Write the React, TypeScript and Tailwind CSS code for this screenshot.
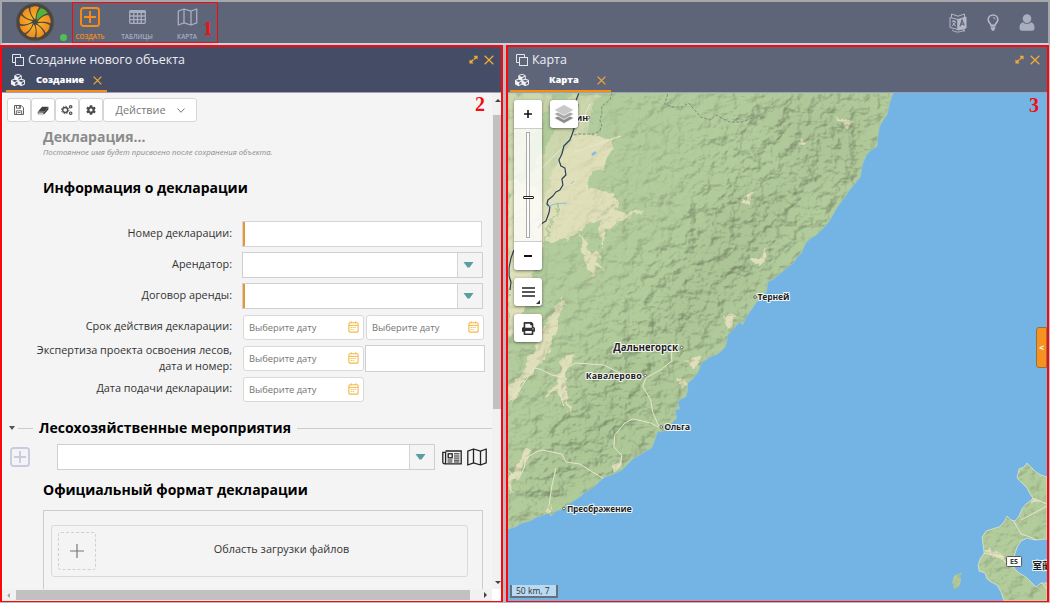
import React from "react";
import { FaCubes, FaCog, FaPrint } from "react-icons/fa";

const COAST =
  "M508 93 L894 93 L892 98 890 104 888 114 884 120 880 127 879 134 878 140 878 146 872 150 867 155 865 160 863 165 862 171 861 177 856 183 850 190 844 199 838 207 834 214 830 221 824 228 818 234 812 238 807 242 804 248 802 253 797 258 793 264 786 269 780 274 774 279 768 282 767 292 762 297 757 302 753 308 750 312 746 318 743 325 741 322 737 325 733 330 728 335 727 342 725 348 718 354 710 357 702 363 698 373 693 379 688 383 688 390 686 397 681 399 678 402 680 409 675 410 677 418 672 423 668 428 662 432 658 431 655 440 652 448 646 451 640 455 634 458 628 464 622 470 614 474 605 477 599 482 593 488 585 492 580 497 575 500 570 503 565 508 560 510 556 511 551 516 549 513 544 515 537 517 530 521 522 523 515 527 508 529 Z";
const HOKKAIDO =
  "M1048 477 L1042 475 1037 472 1032 467 1028 463 1025 467 1020 469 1018 478 1023 483 1028 488 1031 494 1034 498 1031 501 1027 504 1023 509 1020 516 1016 521 1012 520 1008 516 1005 522 1000 527 993 529 987 531 983 537 984 545 985 553 981 559 979 565 980 571 986 573 988 579 992 582 998 585 1002 592 1005 601 1048 601 1048 583 1042 583 1037 587 1032 582 1027 577 1020 573 1015 568 1015 557 1018 547 1022 541 1028 538 1036 540 1048 539 Z";
const ISLET = "M963 572 L961 576 962 581 959 588 955 589 953 582 955 576 959 574 Z";

function LogoIcon() {
  const petals = [0, 40, 80, 120, 160, 200, 240, 280, 320];
  return (
    <svg viewBox="-20 -20 40 40" className="size-10">
      <defs>
        <radialGradient id="petal" gradientUnits="userSpaceOnUse" cx="0" cy="0" r="16">
          <stop offset="0" stopColor="#f9c02c" />
          <stop offset="1" stopColor="#f08a1e" />
        </radialGradient>
      </defs>
      <circle r="18.800" fill="#4a4640" stroke="#5b564c" strokeWidth=".8" />
      {petals.map((a) => (
        <path
          key={a}
          transform={`rotate(${a})`}
          d="M.3 -2.500 C-2.500 -5 -5 -9 -4.600 -14.200 C-2 -16 2 -16.200 4.200 -14.800 C1.500 -11.500 1 -7 .3 -2.500Z"
          fill={a === 40 ? "#4fb53a" : "url(#petal)"}
        />
      ))}
    </svg>
  );
}

function PlusBox({ className }: { className: string }) {
  return (
    <svg viewBox="0 0 20 20" className={className} fill="none" stroke="currentColor">
      <rect x="1" y="1" width="18" height="18" rx="2.600" strokeWidth="1.900" />
      <path d="M10 4v12M4 10h12" strokeWidth="1.900" />
    </svg>
  );
}

function TableIcon() {
  return (
    <svg viewBox="0 0 17 14" className="h-[14px] w-[17px]" fill="none" stroke="#a9aec0" strokeWidth="1.300">
      <rect x=".7" y=".7" width="15.600" height="12.600" rx="1" />
      <path d="M.7 1.800h15.600" strokeWidth="2.400" />
      <path d="M1 6h15M1 9.600h15M4.800 2v11M8.500 2v11M12.200 2v11" />
    </svg>
  );
}

function MapIcon({ className }: { className: string }) {
  return (
    <svg viewBox="0 0 20 18" className={className} fill="none" stroke="currentColor" strokeWidth="1.300" strokeLinejoin="round">
      <path d="M.8 3.200 6.500 1l7 2.200L19.200 1v13.800L13.500 17l-7-2.200L.8 17ZM6.500 1v13.800M13.500 3.200V17" />
    </svg>
  );
}

function WindowIcon() {
  return (
    <svg viewBox="0 0 12 12" className="size-3" fill="none" stroke="#e4e6ee" strokeWidth="1">
      <path d="M3 8.500H.5v-8h8V3" />
      <rect x="3.500" y="3.500" width="8" height="8" />
    </svg>
  );
}

function ExpandIcon() {
  return (
    <svg viewBox="0 0 10 10" className="size-[9px]" fill="#f0ad35">
      <path d="M5 .7h4.500v4.500L8 3.700 6.100 5.600 4.900 4.400 6.500 2.400ZM.5 9.500V5L2 6.400 4 4.600l1.200 1.200L3.500 7.800 5 9.500Z" />
    </svg>
  );
}

function CloseIcon({ className }: { className: string }) {
  return (
    <svg viewBox="0 0 10 10" className={className} stroke="#f0ad35" strokeWidth="1.300">
      <path d="M.7.7l8.600 8.600M9.300.7L.7 9.300" />
    </svg>
  );
}

function SaveIcon() {
  return (
    <svg viewBox="0 0 11 11" className="size-[10px]" fill="none" stroke="#4c4c4c">
      <path d="M.6.6h7.400l2.400 2.400v7.400H.6Z" />
      <path d="M2.800.8v2.800h4.400V.8M6 1v2M2.600 10.200V6.400h5.800v3.800M4 8.300h3" strokeWidth=".9" />
    </svg>
  );
}

function EraserIcon() {
  return (
    <svg viewBox="0 0 12 9" className="h-[9px] w-3">
      <path d="M5 .8h6.400L7.200 5.800H.9Z" fill="#3f3f3f" />
      <path d="M.8 5.900h6.400v2.400H.8ZM7.200 8.300l4.200-4.800V.8L7.200 5.800Z" fill="#3f3f3f" />
      <path d="M1.300 6.600h5.200v1.100H1.300Z" fill="#fff" />
    </svg>
  );
}

function CogsIcon() {
  return (
    <svg viewBox="0 0 12 12" className="size-3" fill="none" stroke="#4c4c4c">
      <circle cx="4.200" cy="6" r="2.500" strokeWidth="1.400" />
      <circle cx="4.200" cy="6" r="3.700" strokeWidth="1" strokeDasharray="1.400 1.500" />
      <circle cx="9.700" cy="2.800" r="1.200" strokeWidth="1.200" />
      <circle cx="9.700" cy="9.200" r="1.200" strokeWidth="1.200" />
    </svg>
  );
}

function CalendarIcon() {
  return (
    <svg viewBox="0 0 11 12" className="h-3 w-[11px]" fill="none" stroke="#f5b845">
      <rect x=".9" y="1.700" width="9.200" height="9.400" rx="1" strokeWidth="1.100" />
      <path d="M1 4.400h9M3.200.3v2M7.800.3v2" strokeWidth="1" />
      <path d="M2.600 6.500h6M2.600 8.600h4.200" strokeWidth="1" strokeDasharray="1.200 .8" />
    </svg>
  );
}

function NewsIcon() {
  return (
    <svg viewBox="0 0 20 15" className="h-[15px] w-5" fill="none" stroke="#222" strokeWidth="1.300">
      <path d="M3.600 1h15.600v12.800H2.400C1.400 13.800.8 13 .8 12V2.400h2.800v9.600c0 1-.5 1.800-1.200 1.800" />
      <rect x="6.200" y="3.800" width="4" height="4" />
      <path d="M12 3.800h5.400M12 6h5.400M12 8.100h5.400M5.600 10h4.800M12 10.200h5.400M5.600 12h4.800M12 12h5.400" strokeWidth="1" />
    </svg>
  );
}

function LanguageIcon() {
  return (
    <svg viewBox="0 0 18 20" className="h-5 w-[18px]" fill="none" stroke="#b4b8c6" strokeWidth="1">
      <path d="M1 4.500 9 6.500v10L1 14.500ZM2.500 4V1l6.500 2.200L15.500 1v3" />
      <path d="M9 6.500 17 4v11l-8 2Z" fill="#b4b8c6" />
      <path d="M3 8l4 1M5 7v2M6.500 9 3 13.200M3.800 9.700l3 3.600" />
      <path d="M11 13.500 13 7l2.200 5.500M11.700 11.500l3-.6" stroke="#5f6477" strokeWidth="1.200" />
      <path d="M3 17c3 2.500 8 2.700 12 .2M13.500 16.700l2 .2-.5 1.900" />
    </svg>
  );
}

function BulbIcon() {
  return (
    <svg viewBox="0 0 12 17" className="h-[17px] w-3" fill="none" stroke="#b4b8c6">
      <path d="M4 11.300C3.800 9.500 1.200 8.500 1.200 5.600A4.800 4.600 0 0 1 10.800 5.600C10.800 8.500 8.200 9.500 8 11.300Z" strokeWidth="1.600" />
      <path d="M6 3.500a2 2 0 0 1 2 1.800" strokeWidth="1" />
      <path d="M3.600 12.900h4.800M3.800 14.500h4.400M4.700 16h2.600" strokeWidth="1.300" />
    </svg>
  );
}

function UserIcon() {
  return (
    <svg viewBox="0 0 16 17" className="h-[17px] w-4" fill="#a9aebf">
      <circle cx="8" cy="4.600" r="4.300" />
      <path d="M4 8.300C1.500 8.700.5 11 .5 14c0 1.800 1 2.700 2.500 2.700h10c1.500 0 2.500-.9 2.500-2.700 0-3-1-5.300-3.500-5.700C10 10.300 6 10.300 4 8.300Z" />
    </svg>
  );
}

function LayersIcon() {
  return (
    <svg viewBox="0 0 22 20" className="h-5 w-[22px]" stroke="#fff" strokeWidth=".7">
      <path d="M1 14l10-5 10 5-10 5.500Z" fill="#8b8b8b" />
      <path d="M1 10l10-5 10 5-10 5.500Z" fill="#a7a7a7" />
      <path d="M1 6l10-5.500L21 6l-10 5.500Z" fill="#c9c9c9" />
    </svg>
  );
}

function NavItem({ icon, label, active }: { icon: React.ReactNode; label: string; active?: boolean }) {
  return (
    <div className={`flex flex-col items-center ${active ? "w-[46px] text-[#fb8c12]" : "w-12 text-[#a9aec0]"}`}>
      <div className="flex h-[22px] items-center">{icon}</div>
      <div className="mt-[4px] whitespace-nowrap text-[6.300px] font-semibold leading-[9px]">{label}</div>
    </div>
  );
}

function PanelHeader({ title, tab, tabGap, dark }: { title: string; tab: string; tabGap: string; dark?: boolean }) {
  return (
    <div className={`h-[46px] shrink-0 border-b border-[#9da2b2] ${dark ? "bg-[#454c66] pl-[4px]" : "bg-[#5f6579] pl-[2px]"}`}>
      <div className="flex h-[25px] items-center pl-[6px] pr-[7px]">
        <WindowIcon />
        <h1 className="ml-[4px] flex-1 text-[12.450px] leading-5 text-[#eceef4]">{title}</h1>
        <ExpandIcon />
        <CloseIcon className="ml-[6px] size-[10px]" />
      </div>
      <div className="flex h-5 w-[101px] items-start border-b-2 border-[#fb8c12] pl-[5px]">
        <FaCubes className="mt-px size-[14px] text-[#f1f2f6]" />
        <span className={`text-[9.350px] font-extrabold leading-[15px] text-white ${tabGap}`}>{tab}</span>
        <CloseIcon className="ml-auto mr-[5px] mt-[4px] size-[9px]" />
      </div>
    </div>
  );
}

function ToolButton({ children, wide }: { children: React.ReactNode; wide?: boolean }) {
  return (
    <button
      className={`flex h-6 items-center justify-center rounded-[3px] border border-[#d6d6d6] bg-white text-[#4c4c4c] ${wide ? "w-[94px]" : "w-6"}`}
    >
      {children}
    </button>
  );
}

function Row({ label, children }: { label: React.ReactNode; children: React.ReactNode }) {
  return (
    <div className="flex h-[31px] items-center">
      <div className="w-[229px] pb-[2px] text-right text-[10.860px] leading-4 text-[#333]">{label}</div>
      <div className="ml-[10px] flex items-center">{children}</div>
    </div>
  );
}

function Combo({ required, className }: { required?: boolean; className: string }) {
  return (
    <div className={`flex h-[26px] border border-[#cfcfcf] bg-white ${className}`}>
      {required && <div className="w-[2px] bg-[#ec9430]" />}
      <div className="ml-auto flex w-[25px] items-center justify-center border-l border-[#d5d5d5] bg-[#f4f4f4]">
        <svg viewBox="0 0 10 6" className="mr-[3px] h-[6px] w-[11px]" fill="#5a9ea1">
          <path d="M0 0h10L6 5.500H4Z" />
        </svg>
      </div>
    </div>
  );
}

function DateField({ className }: { className: string }) {
  return (
    <div className={`mt-px flex h-[25px] items-center justify-between rounded-[3px] border border-[#d9d9d9] bg-white pl-[5px] pr-[4px] ${className}`}>
      <span className="pt-[2px] text-[9.350px] text-[#757575]">Выберите дату</span>
      <CalendarIcon />
    </div>
  );
}

function FormPanel() {
  return (
    <section className="flex w-[503px] flex-col border-2 border-b border-[#fb070c] bg-[#f4f4f4]">
      <PanelHeader dark title="Создание нового объекта" tab="Создание" tabGap="ml-[11px]" />
      <div className="flex min-h-0 flex-1">
        <div className="min-w-0 flex-1 overflow-hidden border-l border-white pt-[5px]">
          <div className="flex pl-[4px]">
            <ToolButton><SaveIcon /></ToolButton>
            <ToolButton><EraserIcon /></ToolButton>
            <ToolButton><CogsIcon /></ToolButton>
            <ToolButton><FaCog className="size-[10px]" /></ToolButton>
            <ToolButton wide>
              <span className="text-[10.900px] text-[#777]">Действие</span>
              <svg viewBox="0 0 8 5" className="ml-[11px] h-[5px] w-2" fill="none" stroke="#777" strokeWidth="1">
                <path d="M.5.5 4 4.300 7.500.5" />
              </svg>
            </ToolButton>
          </div>
          <div className="pl-10">
            <h2 className="mt-[5px] text-[14px] font-bold leading-5 text-[#8b8b8b]">Декларация...</h2>
            <p className="text-[7.780px] italic leading-[10px] text-[#8b8b8b]">
              Постоянное имя будет присвоено после сохранения объекта.
            </p>
            <h3 className="mt-[21px] text-[14px] font-bold leading-5 text-black">Информация о декларации</h3>
          </div>
          <div className="mt-[20px]">
            <Row label="Номер декларации:">
              <div className="h-[26px] w-[240px] border border-[#d5d5d5] bg-white">
                <div className="h-full w-[2px] bg-[#ec9430]" />
              </div>
            </Row>
            <Row label="Арендатор:"><Combo className="w-[241px]" /></Row>
            <Row label="Договор аренды:"><Combo required className="w-[241px]" /></Row>
            <Row label="Срок действия декларации:">
              <DateField className="ml-px w-[121px]" />
              <DateField className="ml-[2px] w-[118px]" />
            </Row>
            <Row label={<div className="pt-[3px]">Экспертиза проекта освоения лесов,<br />дата и номер:</div>}>
              <DateField className="ml-px w-[121px]" />
              <div className="ml-px mt-px h-[27px] w-[120px] border border-[#cfcfcf] bg-white" />
            </Row>
            <Row label="Дата подачи декларации:"><DateField className="ml-px w-[121px]" /></Row>
          </div>
          <div className="mt-[14px] flex h-5 items-center pl-[6px]">
            <svg viewBox="0 0 6 4" className="h-1 w-[6px]" fill="#555"><path d="M0 0h6L3 4Z" /></svg>
            <div className="ml-[3px] w-[15px] border-t border-[#ccc]" />
            <h3 className="mx-[6px] text-[14px] font-bold leading-5 text-black">Лесохозяйственные мероприятия</h3>
            <div className="flex-1 border-t border-[#ccc]" />
          </div>
          <div className="mt-[5px] flex h-[28px] items-center pl-[7px]">
            <PlusBox className="size-5 text-[#c9cce0]" />
            <Combo className="ml-[27px] w-[378px]" />
            <div className="ml-[7px]"><NewsIcon /></div>
            <MapIcon className="ml-[5px] h-[18px] w-5 text-[#222]" />
          </div>
          <h3 className="ml-10 mt-[9px] text-[14px] font-bold leading-5 text-black">Официальный формат декларации</h3>
          <div className="ml-10 mt-[10px] h-[100px] w-[440px] border border-[#ccc] px-[7px] pt-[14px]">
            <div className="flex h-[52px] w-[417px] items-center rounded-[3px] border border-[#d9d9d9] pl-[6px]">
              <div className="flex size-[38px] items-center justify-center rounded-[3px] border border-dashed border-[#d0d0d0]">
                <svg viewBox="0 0 14 14" className="size-[14px]" stroke="#777" strokeWidth="1.200"><path d="M7 0v14M0 7h14" /></svg>
              </div>
              <span className="flex-1 pb-[4px] text-center text-[10.900px] text-[#333]">Область загрузки файлов</span>
            </div>
          </div>
        </div>
        <div className="flex w-[9px] shrink-0 flex-col items-end bg-[#f1f1f1]">
          <svg viewBox="0 0 6 3" className="mt-[6px] h-[3px] w-[6px] shrink-0" fill="#444"><path d="M0 3h6L3 0Z" /></svg>
          <div className="mt-[13px] h-[294px] w-2 shrink-0 bg-[#c1c1c1]" />
          <svg viewBox="0 0 6 3" className="mb-[5px] mt-auto h-[3px] w-[6px] shrink-0" fill="#444"><path d="M0 0h6L3 3Z" /></svg>
        </div>
      </div>
      <div className="flex h-3 shrink-0 items-center bg-white">
        <div className="flex h-full w-[490px] items-center bg-[#f1f1f1]">
          <svg viewBox="0 0 3 6" className="ml-[5px] h-[5px] w-[3px]" fill="#999"><path d="M3 0v6L0 3Z" /></svg>
          <div className="ml-[6px] h-[10px] w-[454px] bg-[#c1c1c1]" />
          <svg viewBox="0 0 3 6" className="ml-[14px] h-[6px] w-[3px]" fill="#444"><path d="M0 0v6l3-3Z" /></svg>
        </div>
      </div>
    </section>
  );
}

const places: { x: number; y: number; name: string; size: number; dot: number; length: number }[] = [
  { x: 758, y: 300.500, name: "Терней", size: 9, dot: 755.500, length: 32 },
  { x: 613.500, y: 351, name: "Дальнегорск", size: 10, dot: 682, length: 65 },
  { x: 586, y: 379, name: "Кавалерово", size: 9, dot: 645.500, length: 56 },
  { x: 664.500, y: 430.500, name: "Ольга", size: 9, dot: 661.500, length: 26 },
  { x: 567, y: 512, name: "Преображение", size: 9, dot: 564, length: 65 },
];

function Terrain() {
  return (
    <svg viewBox="508 93 540 508" className="block h-full w-full" preserveAspectRatio="none">
      <defs>
        <clipPath id="land"><path d={COAST} /><path d={HOKKAIDO} /><path d={ISLET} /></clipPath>
        <filter id="relief" x="0" y="0" width="100%" height="100%" colorInterpolationFilters="sRGB">
          <feTurbulence type="fractalNoise" baseFrequency="0.075 0.085" numOctaves="4" seed="11" result="n" />
          <feColorMatrix in="n" type="matrix" values="0 0 0 0 0 0 0 0 0 0 0 0 0 0 0 .7 .3 0 0 0" result="h" />
          <feDiffuseLighting in="h" surfaceScale="6" diffuseConstant="1.150" lightingColor="#ffffff">
            <feDistantLight azimuth="225" elevation="60" />
          </feDiffuseLighting>
        </filter>
        <filter id="rough" x="-20%" y="-20%" width="140%" height="140%">
          <feTurbulence type="fractalNoise" baseFrequency="0.090" numOctaves="3" seed="3" />
          <feDisplacementMap in="SourceGraphic" scale="13" xChannelSelector="R" yChannelSelector="G" />
          <feGaussianBlur stdDeviation=".6" />
        </filter>
        <filter id="soft" x="-20%" y="-20%" width="140%" height="140%"><feGaussianBlur stdDeviation="14" /></filter>
        <mask id="mountains">
          <rect x="508" y="93" width="540" height="510" fill="#888" />
          <g filter="url(#soft)">
            <path d="M730 93H890L860 190 760 290 690 360 620 470 520 530 530 440 620 310 690 200Z" fill="#fff" />
            <path d="M508 93H620L600 210 540 290 508 350Z" fill="#222" />
          </g>
        </mask>
      </defs>
      <rect x="508" y="93" width="540" height="508" fill="#73b4e5" />
      <g clipPath="url(#land)">
        <rect x="508" y="93" width="540" height="508" fill="#b3cc9c" />
        <g filter="url(#soft)" opacity=".5">
          <path d="M720 200 810 170 760 280 690 350 650 340 690 260Z" fill="#a6bd90" />
          <path d="M620 340 690 380 640 450 560 500 520 500 570 400Z" fill="#a6c190" />
          <path d="M760 100h110v60l-60 30Z" fill="#a8bf92" />
        </g>
        <g fill="#dfe0b9" filter="url(#rough)">
          <path d="M508 93h44l-6 20-18 26-4 30-16 20Z" opacity=".6" />
          <path d="M572 93h26l-4 22-10 22-4 26-18 14-14 28-14 26-6 26-14 16-14 10-4-30 10-36 14-30 24-34Z" opacity=".6" />
          <path d="M560 158l22-26 32 10-8 22-16 10-2 16-30 16-12 30-18 44-12 8 6-44 18-34Z" />
          <path d="M508 180l26 6 14 24-8 40-12 40-8 40-12 10Z" />
          <path d="M564 196l28-8 24 8-2 18-28 12-20 16-20-2Z" />
          <path d="M604 214l40-4-20 10-18 8-2 18-6-12Z" />
          <path d="M582 232l8 16 14 8-6 4 8 12-12-8-4 16-6-22Z" />
          <path d="M508 382l14-10 16-30 4-14 22-30-8 34-12 26-20 24-16 22Z" />
          <path d="M558 376l6-18 12-4-10 18 0 18 4 22-12-20-14 6Z" />
          <path d="M508 474l20-26 4 4-14 22-10 24Z" />
          <path d="M798 136l10 12-10-2ZM840 118l16 6-10 4ZM742 200l12-8-6 14ZM750 260l20-10-10 16Z" />
          <path d="M687 362l16-6-6 14ZM676 378l14 6-6 4ZM726 314l14 4-14 10Z" />
          <path d="M548 504l6 14-8-6ZM612 466l12-4-8 10Z" />
          <path d="M1032 494l10 6-10 6ZM986 549l14 4 12 12-18-8Z" />
        </g>
        <rect x="508" y="93" width="540" height="508" filter="url(#relief)" className="mix-blend-multiply" opacity=".4" mask="url(#mountains)" />
        <g fill="none" stroke="#e5e6cf" strokeWidth="1" strokeLinejoin="round">
          <path d="M508 402l14-16 12-18 6 1 12 6 10 2 6-10 8-4 28 2 8 4 12 6 24 2 14-8 10-8 0-12M560 376l0 18 4 12M647 376l-4 10 8 14 2 12 5 12 3 4M661 428l-10-5-8-2-10-2-8 4-10 12-1 12 8 8-2 12-6 5" />
          <path d="M508 470l10 10 6-12 2-10 10-6 6-2 20 4 4 8 14 2 16 10 10 6 10-4M556 468l-4 18-3 20M540 170l36-36 14-30M575 152l46-16" />
          <path d="M1048 546l-14-8-12-4-8-14M1020 545l-6 22 24 10 10 12M985 553l20 4M1033 498l15 6M1022 520l26-14" />
        </g>
        <g fill="none" stroke="#2a3f57" strokeWidth="1.200" strokeLinejoin="round">
          <path d="M579 93l-3 8 2 4-2 6 0 12-4 12-2 5-6 6-2 8-3 6 2 6 4 2 1 7-4 4 1 6-3 5-4 2-3 4-5 4-1 4 3 3-1 6-3 8-5 3-3 4" />
          <path d="M514 250l-3 8-2 10 0 8 2 6-1 8" />
        </g>
        <g fill="none" stroke="#7d8b87" strokeWidth="1">
          <path d="M574 135l4-1 16 0 6-3 2-6-2-5 2-6 0-8 8-6 2-7M668 94l-3 10 8 3 10 0 6-4 12 14 10 3 5-5 14 7 12 0 20-7 14-14" strokeDasharray="3 1.500" />
          <path d="M542 212l-4 8 -6 2-2 10 4 6-3 8-3 10" stroke="#a7bdc5" />
        </g>
        <g fill="none" stroke="#86b9dd" strokeWidth=".9">
          <path d="M547 207l8-3 12-1M586 118l8 6M537 300l8 8M571 184l3-3" />
          <path d="M592 155l4-3" strokeWidth="2.500" />
        </g>
      </g>
      <path d={COAST} fill="none" stroke="#a5c8b4" strokeWidth=".7" />
      <path d={HOKKAIDO} fill="none" stroke="#dce5ce" strokeWidth=".8" />
      <g className="font-bold" fill="#222" stroke="#fff" strokeOpacity=".85" strokeWidth="2.200" strokeLinejoin="round" style={{ paintOrder: "stroke" }}>
        <text x="576" y="121" fontSize="9">ин</text>
        {places.map((p) => (
          <text key={p.name} x={p.x} y={p.y} fontSize={p.size} textLength={p.length}>{p.name}</text>
        ))}
        <text x="1033.500" y="569.500" fontSize="9.500" fontFamily="Noto Sans CJK JP">室蘭</text>
      </g>
      <g fill="#fff" stroke="#444" strokeWidth=".8">
        <circle cx="588.500" cy="117.500" r="1.300" />
        {places.map((p) => (
          <circle key={p.name} cx={p.dot} cy={p.y - 3.500} r="1.300" />
        ))}
      </g>
      <rect x="1007.500" y="556.500" width="15" height="10" rx="1" fill="#fff" stroke="#555" />
      <text x="1011" y="564.500" fontSize="7" fontWeight="700" fill="#333">E5</text>
    </svg>
  );
}

function MapPanel() {
  return (
    <section className="flex w-[543px] flex-col border-2 border-b border-[#fb070c] bg-[#73b4e5]">
      <PanelHeader title="Карта" tab="Карта" tabGap="ml-[20px]" />
      <div className="relative min-h-0 flex-1">
        <Terrain />
        <div className="absolute left-[6px] top-[7px] flex w-7 flex-col gap-2">
          <div className="flex h-[170px] flex-col overflow-hidden rounded-[3px] shadow-[0_1px_3px_rgba(0,0,0,.5)]">
            <div className="flex h-7 items-center justify-center bg-white">
              <svg viewBox="0 0 8 8" className="size-2" stroke="#111" strokeWidth="1.600"><path d="M4 0v8M0 4h8" /></svg>
            </div>
            <div className="flex flex-1 items-center justify-center border-y border-[#ccc] bg-white/80">
              <div className="flex h-[106px] w-1 justify-center border border-[#aaa] bg-white/80 pt-[63px]">
                <div className="h-[3px] w-[11px] shrink-0 rounded-[1px] border border-[#222] bg-white" />
              </div>
            </div>
            <div className="flex h-7 items-center justify-center bg-white">
              <div className="h-[2px] w-2 bg-[#111]" />
            </div>
          </div>
          <div className="relative flex h-7 items-center justify-center rounded-[3px] bg-white shadow-[0_1px_3px_rgba(0,0,0,.5)]">
            <svg viewBox="0 0 13 10" className="h-[10px] w-[13px]" stroke="#222" strokeWidth="1.500"><path d="M0 1h13M0 5h13M0 9h13" /></svg>
            <svg viewBox="0 0 4 4" className="absolute bottom-[2px] right-[2px] size-1" fill="#333"><path d="M4 0v4H0Z" /></svg>
          </div>
          <div className="flex h-7 items-center justify-center rounded-[3px] bg-white shadow-[0_1px_3px_rgba(0,0,0,.5)]">
            <FaPrint className="size-[13px] text-[#333]" />
          </div>
        </div>
        <div className="absolute left-[42px] top-[7px] flex size-7 items-center justify-center rounded-[3px] bg-white shadow-[0_1px_3px_rgba(0,0,0,.5)]">
          <LayersIcon />
        </div>
        <div className="absolute right-0 top-[234px] flex h-[41px] w-[11px] items-center justify-center rounded-l-[3px] border border-[#8f7341] bg-[#f79120] text-[9px] font-bold text-white">
          &lt;
        </div>
        <div className="absolute bottom-[3px] left-[2px] h-[13px] w-[48px] border-2 border-t-0 border-[#66727b] bg-[#b9daf2] pl-[4px] text-[8.500px] leading-[11px] text-[#333]">
          50 km, 7
        </div>
      </div>
    </section>
  );
}

export default function App() {
  return (
    <div className="relative flex h-[603px] w-[1050px] flex-col overflow-hidden bg-[#b8bac4] font-['Open_Sans','Noto_Sans',sans-serif]">
      <header className="flex h-[45px] shrink-0 items-start border-2 border-[#a6a7ab] border-b-[#c5d5df] bg-[#5f6579]">
        <div className="ml-[13px]"><LogoIcon /></div>
        <div className="ml-[5px] mt-[32px] size-[7px] rounded-full bg-[#4fc057]" />
        <nav className="flex pt-[4px]">
          <NavItem active label="СОЗДАТЬ" icon={<PlusBox className="size-5" />} />
          <NavItem label="ТАБЛИЦЫ" icon={<TableIcon />} />
          <div className="ml-[2px]"><NavItem label="КАРТА" icon={<MapIcon className="h-[18px] w-[21px]" />} /></div>
        </nav>
        <div className="ml-auto flex h-[41px] items-center gap-[20px] pr-[13px]">
          <LanguageIcon />
          <BulbIcon />
          <UserIcon />
        </div>
      </header>
      <main className="flex h-[557px] gap-[3px]">
        <FormPanel />
        <MapPanel />
      </main>
      <div className="absolute left-[72px] top-[2px] h-[41px] w-[146px] border-[1.500px] border-[#fb070c]" />
      <div className="absolute left-[203px] top-[19px] font-['Liberation_Serif',serif] text-[19px] font-bold leading-5 text-[#f50d10]">1</div>
      <div className="absolute left-[475px] top-[94px] font-['Liberation_Serif',serif] text-[20px] font-bold leading-5 text-[#f50d10]">2</div>
      <div className="absolute left-[1029px] top-[95px] font-['Liberation_Serif',serif] text-[20px] font-bold leading-5 text-[#f50d10]">3</div>
    </div>
  );
}
